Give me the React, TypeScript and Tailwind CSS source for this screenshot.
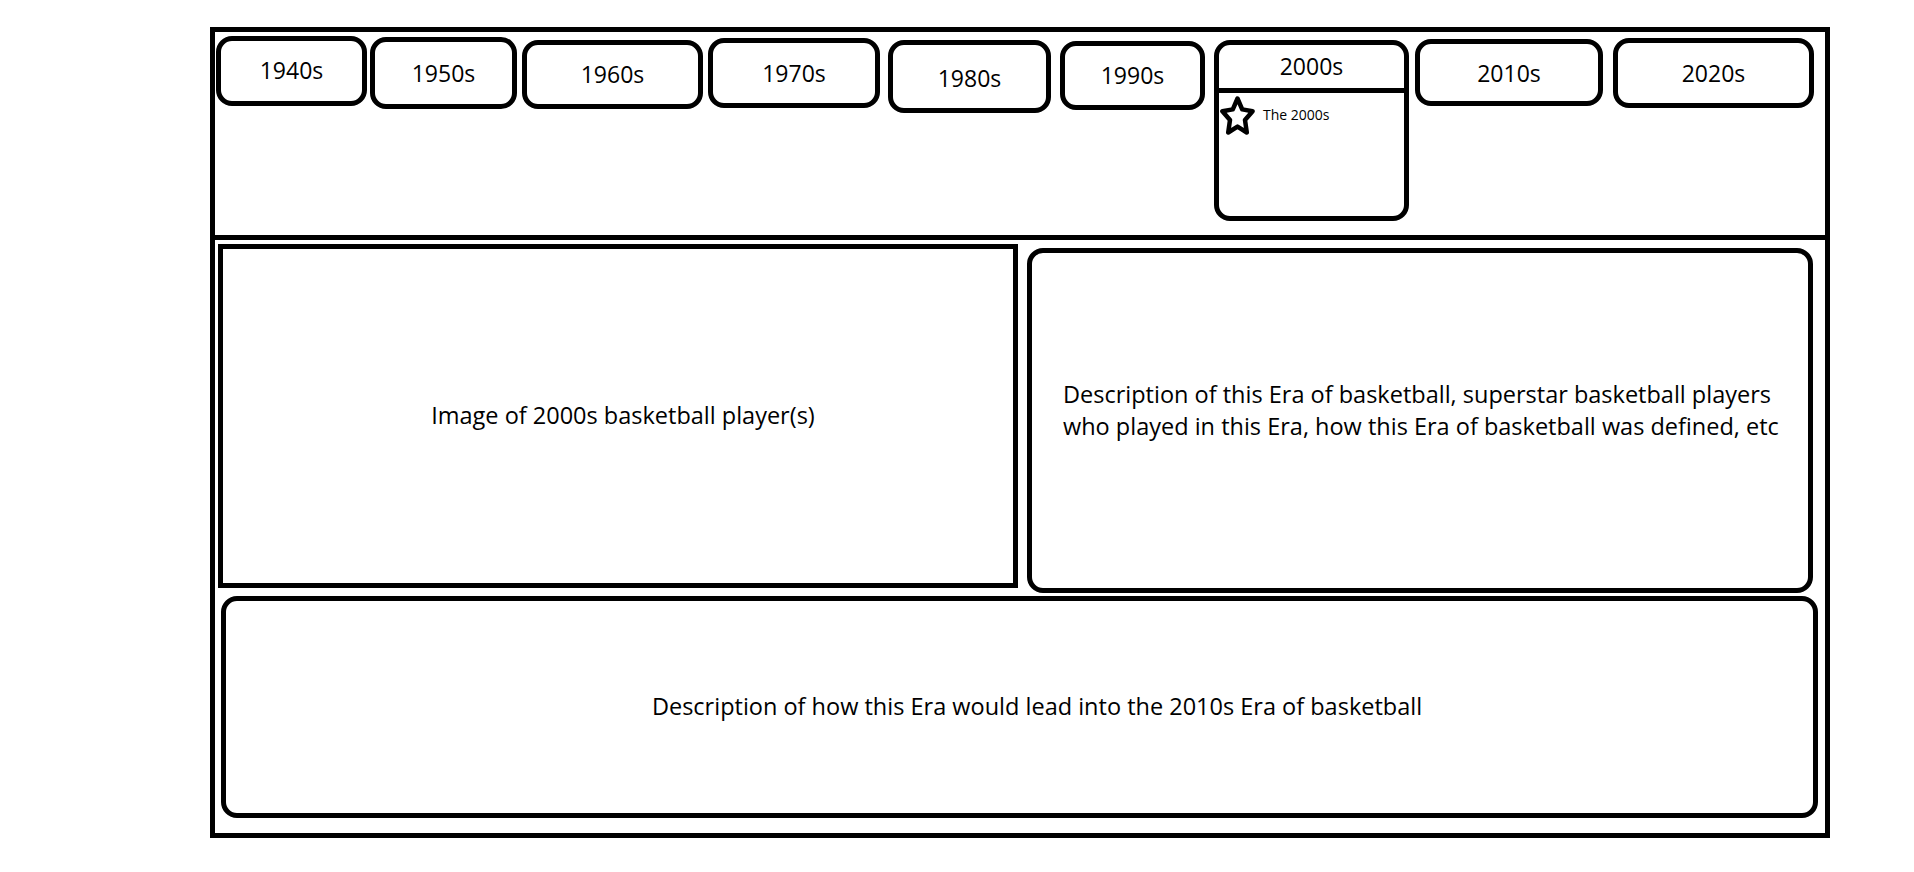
import React from 'react';

const eras = [
    { label: '1940s', cls: 'ml-[1px] mt-[4px] w-[151px] h-[70px]', text: 'pb-[2px]' },
    { label: '1950s', cls: 'ml-[3px] mt-[5px] w-[147px] h-[72px]', text: 'pt-[1px]' },
    { label: '1960s', cls: 'ml-[5px] mt-[8px] w-[181px] h-[69px]', text: 'pb-[1px]' },
    { label: '1970s', cls: 'ml-[5px] mt-[6px] w-[172px] h-[70px]', text: 'pt-[1px]' },
    { label: '1980s', cls: 'ml-[8px] mt-[8px] w-[163px] h-[73px]', text: 'pt-[3px]' },
    { label: '1990s', cls: 'ml-[9px] mt-[9px] w-[145px] h-[69px]', text: 'pb-[1px]' },
    { label: '2000s', cls: '', text: '' },
    { label: '2010s', cls: 'ml-[6px] mt-[7px] w-[188px] h-[67px]', text: 'pt-[1px]' },
    { label: '2020s', cls: 'ml-[10px] mt-[6px] w-[201px] h-[70px]', text: 'pt-[1px]' },
];

function Star() {
    return (
        <svg width="35" height="40" viewBox="0 0 35 40" className="shrink-0">
            <polygon
                points="17.5,2.5 22.2,13.4 32.6,15.2 25,24 26.8,36.5 17.5,30.6 8.2,36.5 10,24 2.4,15.2 12.8,13.4"
                fill="none"
                stroke="black"
                strokeWidth="4.5"
                strokeLinejoin="round"
            />
        </svg>
    );
}

function ActiveEra() {
    return (
        <div className="ml-[9px] mt-[8px] w-[195px] h-[181px] border-[5px] border-black rounded-[16px] flex flex-col">
            <div className="h-[48px] border-b-[5px] border-black flex items-center justify-center text-[23px] pb-[1px]">
                2000s
            </div>
            <div className="flex items-start pl-[1px] pt-[3px]">
                <Star />
                <span className="ml-[8px] mt-[9px] text-[14px] leading-[19px]">The 2000s</span>
            </div>
        </div>
    );
}

export default function App() {
    return (
        <div className="min-h-screen bg-white text-black font-['Open_Sans',sans-serif] pl-[210px] pt-[27px]">
            <div className="w-[1620px] h-[811px] border-[5px] border-black flex flex-col">
                <div className="h-[208px] border-b-[5px] border-black flex items-start shrink-0">
                    {eras.map((era) =>
                        era.label === '2000s' ? (
                            <ActiveEra key={era.label} />
                        ) : (
                            <div
                                key={era.label}
                                className={`${era.cls} border-[5px] border-black rounded-[16px] flex items-center justify-center text-[23px] shrink-0`}
                            >
                                <span className={era.text}>{era.label}</span>
                            </div>
                        )
                    )}
                </div>
                <div className="flex items-start">
                    <div className="ml-[3px] mt-[4px] w-[800px] h-[344px] border-[5px] border-black flex items-center justify-center pl-[10px] text-[23.5px] shrink-0">
                        Image of 2000s basketball player(s)
                    </div>
                    <div className="ml-[9px] mt-[8px] w-[786px] h-[345px] border-[5px] border-black rounded-[16px] pl-[31px] pt-[125px] text-[23.5px] leading-[32px] whitespace-nowrap shrink-0">
                        Description of this Era of basketball, superstar basketball players
                        <br />
                        who played in this Era, how this Era of basketball was defined, etc
                    </div>
                </div>
                <div className="ml-[6px] mt-[3px] w-[1597px] h-[222px] border-[5px] border-black rounded-[16px] flex items-center justify-center pl-[35px] text-[23.5px]">
                    Description of how this Era would lead into the 2010s Era of basketball
                </div>
            </div>
        </div>
    );
}
